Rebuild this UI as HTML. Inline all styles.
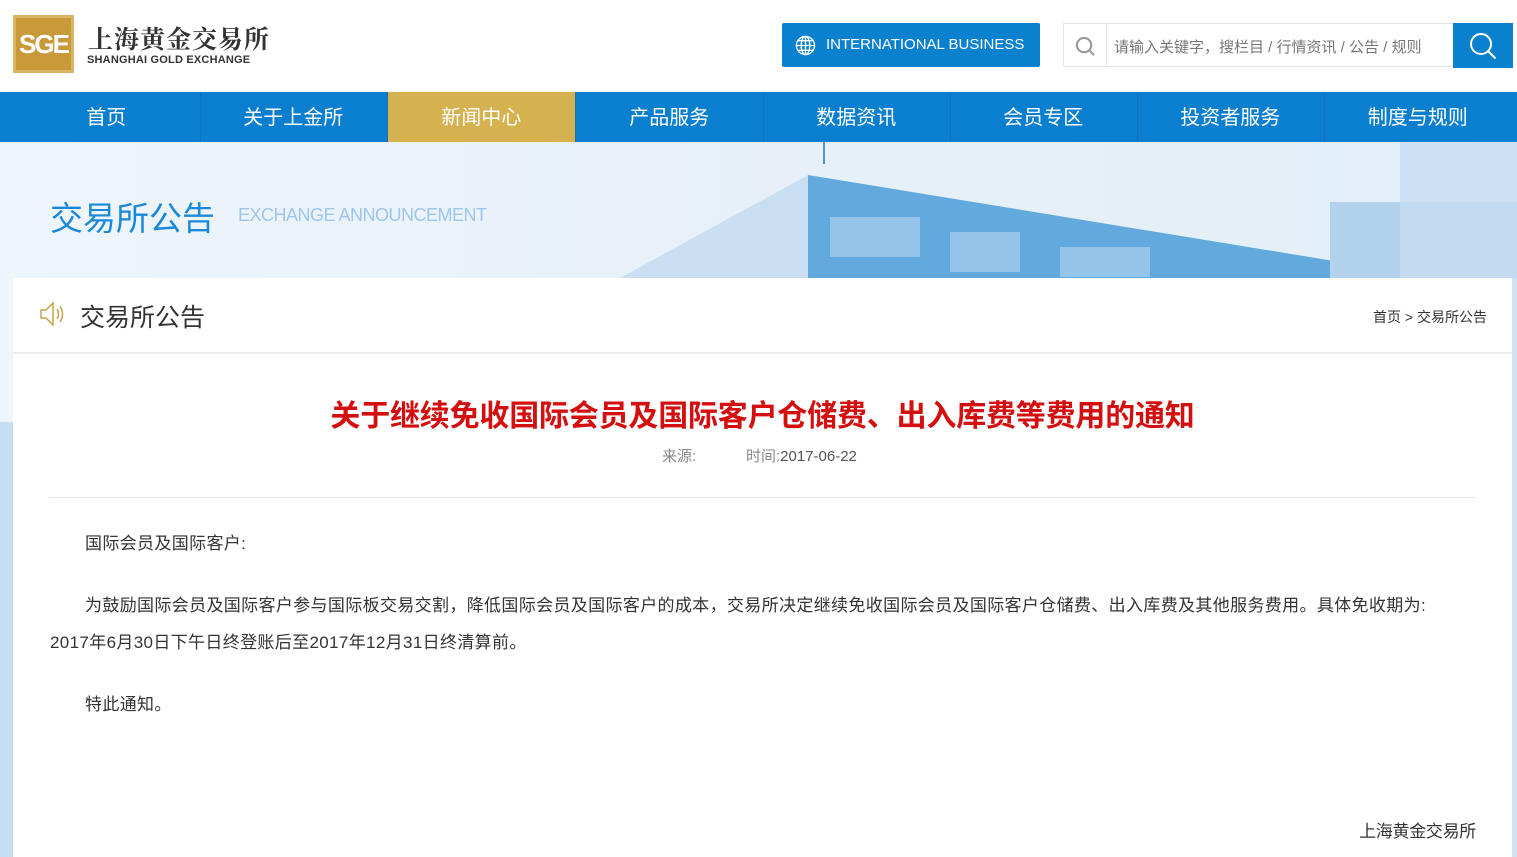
<!DOCTYPE html>
<html><head><meta charset="utf-8"><style>
*{margin:0;padding:0;box-sizing:border-box}
body{width:1517px;height:857px;overflow:hidden;background:#fff;font-family:"Liberation Sans","Noto Sans CJK SC",sans-serif;position:relative}
.logo{position:absolute;left:13px;top:15px;width:61px;height:58px;background:#c89a3a;border:3px solid #d8b463;color:#fff;font:bold 26px "Liberation Sans",sans-serif;text-align:center;line-height:52px;letter-spacing:-2px}
.lt1{position:absolute;left:88px;top:20px;font:bold 25px "Noto Serif CJK SC",serif;color:#333;letter-spacing:1px}
.lt2{position:absolute;left:87px;top:54px;font:bold 11px "Liberation Sans",sans-serif;color:#333;letter-spacing:.2px}
.ib{position:absolute;left:782px;top:23px;width:258px;height:44px;background:#0a81cf;color:#fff;font-size:15px;line-height:44px;padding-left:44px;border-radius:2px}
.ib svg{position:absolute;left:13px;top:12px}
.sb{position:absolute;left:1063px;top:23px;width:391px;height:44px;border:1px solid #e3e3e3;background:#fff}
.sb .d{position:absolute;left:42px;top:0;bottom:0;border-left:1px solid #e8e8e8}
.sb span{position:absolute;left:50px;top:12px;font-size:15px;color:#777}
.sbtn{position:absolute;left:1453px;top:23px;width:60px;height:45px;background:#0a81cf}
.nav{position:absolute;left:0;top:92px;width:1517px;height:50px;background:#0b7fcf;box-shadow:0 3px 6px rgba(0,0,0,.15)}
.nav div{position:absolute;top:0;height:50px;width:187.5px;text-align:center;line-height:52px;color:#fff;font-size:20px;border-right:1px solid #1870b0}
.nav .a{background:#d6b14f}
.ban{position:absolute;left:0;top:142px;width:1517px;height:715px;background:linear-gradient(90deg,#eef5fb 0%,#e8f1f9 40%,#e2eef8 100%)}
.card{position:absolute;left:13px;top:278px;width:1499px;height:579px;background:#fff}
</style></head><body>
<div class="logo">SGE</div>
<div class="lt1">上海黄金交易所</div>
<div class="lt2">SHANGHAI GOLD EXCHANGE</div>
<div class="ib"><svg width="21" height="21" viewBox="0 0 22 22" fill="none" stroke="#fff" stroke-width="1.4"><circle cx="11" cy="11" r="9.5"/><ellipse cx="11" cy="11" rx="4.5" ry="9.5"/><path d="M1.5 11h19M3 6h16M3 16h16M11 1.5v19"/></svg>INTERNATIONAL BUSINESS</div>
<div class="sb"><svg style="position:absolute;left:11px;top:12px" width="21" height="21" viewBox="0 0 22 22" fill="none" stroke="#999" stroke-width="2.2"><circle cx="9.5" cy="9.5" r="7.5"/><path d="M15 15l5 5"/></svg><div class="d"></div><span>请输入关键字，搜栏目 / 行情资讯 / 公告 / 规则</span></div>
<div class="sbtn"><svg style="position:absolute;left:15px;top:8px" width="30" height="30" viewBox="0 0 30 30" fill="none" stroke="#fff" stroke-width="2"><circle cx="13" cy="13" r="10"/><path d="M20.5 20.5l7 7"/></svg></div>
<div class="nav">
<div style="left:13px">首页</div><div style="left:200px">关于上金所</div><div class="a" style="left:388px">新闻中心</div><div style="left:576px">产品服务</div><div style="left:763px">数据资讯</div><div style="left:950px">会员专区</div><div style="left:1137px">投资者服务</div><div style="left:1324px;border:none">制度与规则</div>
</div>
<div class="ban">
<svg style="position:absolute;left:0;top:0" width="1517" height="715">
<polygon points="620,136 808,33 808,136" fill="#c9def1"/>
<polygon points="808,33 1340,120 1340,136 808,136" fill="#62a9de"/>
<rect x="830" y="75" width="90" height="40" fill="#a9d0ef" opacity=".7"/>
<rect x="950" y="90" width="70" height="40" fill="#a9d0ef" opacity=".7"/>
<rect x="1060" y="105" width="90" height="30" fill="#a9d0ef" opacity=".7"/>
<rect x="1330" y="60" width="187" height="76" fill="#b3d2ee"/>
<rect x="1400" y="0" width="117" height="136" fill="#c6ddf1" opacity=".8"/>
<line x1="824" y1="0" x2="824" y2="22" stroke="#4a94d0" stroke-width="2"/>
<rect x="0" y="280" width="13" height="435" fill="#c7def1"/>
<rect x="1512" y="136" width="5" height="579" fill="#cfe2f3"/>
</svg>
<div style="position:absolute;left:50px;top:50px;font-size:33px;color:#1a8ad8">交易所公告</div>
<div style="position:absolute;left:238px;top:63px;font-size:18px;color:#9dc6ea;letter-spacing:-.5px">EXCHANGE ANNOUNCEMENT</div>
</div>
<div class="card">
<svg style="position:absolute;left:26px;top:22px" width="28" height="28" viewBox="0 0 28 28" fill="none" stroke="#c9a14a" stroke-width="1.5"><path d="M2 10h5l7-7v22l-7-7H2z"/><path d="M18 9q3 5 0 10M21 6q5 8 0 16"/></svg>
<div style="position:absolute;left:67px;top:20px;font-size:25px;color:#333">交易所公告</div>
<div style="position:absolute;right:25px;top:29px;font-size:14px;color:#333">首页 &gt; 交易所公告</div>
<div style="position:absolute;left:0;right:0;top:74px;border-top:2px solid #ececec"></div>
<div style="position:absolute;left:0;right:0;top:113px;text-align:center;font-size:30px;font-weight:bold;color:#d40f0f;letter-spacing:-.2px">关于继续免收国际会员及国际客户仓储费、出入库费等费用的通知</div>
<div style="position:absolute;left:649px;top:167px;font-size:15px;color:#888">来源:</div>
<div style="position:absolute;left:733px;top:167px;font-size:15px;color:#888">时间:<span style="color:#555">2017-06-22</span></div>
<div style="position:absolute;left:36px;right:36px;top:219px;border-top:1px solid #e6e6e6"></div>
<div style="position:absolute;left:37px;width:1440px;top:247px;font-size:17px;color:#333;line-height:37px;letter-spacing:.35px;white-space:nowrap">
<p style="text-indent:35px">国际会员及国际客户:</p>
<p style="text-indent:35px;margin-top:25px">为鼓励国际会员及国际客户参与国际板交易交割，降低国际会员及国际客户的成本，交易所决定继续免收国际会员及国际客户仓储费、出入库费及其他服务费用。具体免收期为:<br><span style="display:inline-block;text-indent:0">2017年6月30日下午日终登账后至2017年12月31日终清算前。</span></p>
<p style="text-indent:35px;margin-top:25px">特此通知。</p>
</div>
<div style="position:absolute;right:36px;top:539px;font-size:17px;color:#333;letter-spacing:-.3px">上海黄金交易所</div>
</div>
</body></html>
